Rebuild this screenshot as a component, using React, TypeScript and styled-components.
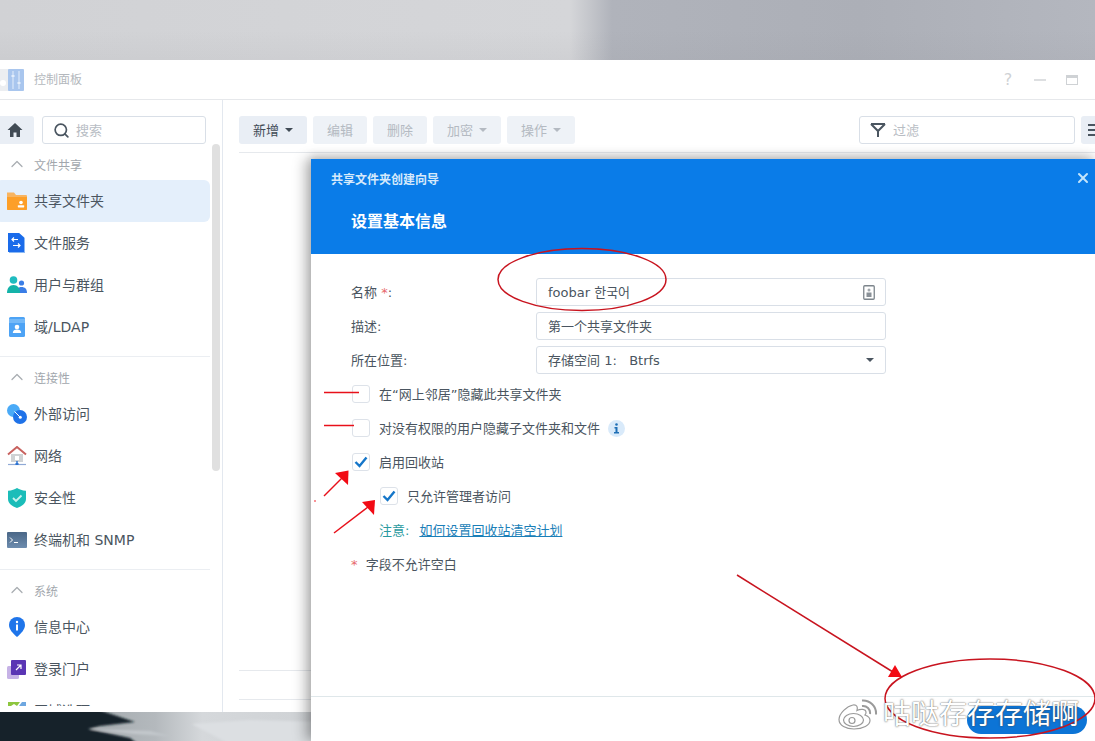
import React from 'react';
import styled, { createGlobalStyle } from 'styled-components';
import { ChevronUp, Search, X } from 'lucide-react';

const font = '"DejaVu Sans", "Noto Sans CJK SC", "Noto Sans CJK KR", sans-serif';

const GlobalStyle = createGlobalStyle`
  html, body {
    margin: 0;
    padding: 0;
    background: #fff;
  }
  * {
    box-sizing: border-box;
  }
`;

const Desktop = styled.div`
  position: relative;
  width: 1095px;
  height: 741px;
  overflow: hidden;
  font-family: ${font};
  background:
    linear-gradient(180deg, rgba(255, 255, 255, 0) 30px, rgba(120, 120, 125, 0.06) 60px),
    linear-gradient(90deg, #d1d2d5 0, #d5d6d9 570px, #c4c6cb 590px, #b0b3bb 612px, #acafb7 860px, #b4b7bf 1095px);
`;

const Wallpaper = styled.svg`
  position: absolute;
  left: 0;
  top: 712px;
  width: 311px;
  height: 29px;
`;

const Window = styled.div`
  position: absolute;
  left: -12px;
  top: 60px;
  width: 1107px;
  height: 652px;
  background: #fff;
  display: flex;
  flex-direction: column;
  overflow: hidden;
`;

const TitleBar = styled.div`
  height: 40px;
  flex-shrink: 0;
  display: flex;
  align-items: center;
  gap: 10px;
  padding: 0 15px 0 10px;
  border-bottom: 1px solid #e6e8eb;
`;

const WindowTitle = styled.div`
  flex: 1;
  font-size: 12px;
  color: #b4b8bd;
  padding-bottom: 2px;
`;

const TitleActions = styled.div`
  display: flex;
  gap: 16px;
  color: #cfd2d5;
`;

const TitleAction = styled.div`
  width: 16px;
  height: 16px;
  display: flex;
  align-items: center;
  justify-content: center;
  font-size: 16px;
`;

const WindowBody = styled.div`
  flex: 1;
  min-height: 0;
  display: flex;
`;

const Sidebar = styled.div`
  width: 235px;
  flex-shrink: 0;
  border-right: 1px solid #e3e8ef;
  padding: 16px 0 0 8px;
  display: flex;
  flex-direction: column;
  overflow: hidden;
`;

const SearchRow = styled.div`
  display: flex;
  gap: 8px;
  flex-shrink: 0;
`;

const HomeButton = styled.div`
  width: 38px;
  height: 28px;
  background: #e9eef5;
  border-radius: 3px;
  display: flex;
  align-items: center;
  justify-content: center;
  padding-right: 1px;
`;

const SearchBox = styled.div<{ $width: number; $gap: number }>`
  width: ${props => props.$width}px;
  height: 28px;
  flex-shrink: 0;
  border: 1px solid #d9dfe7;
  border-radius: 3px;
  background: #fff;
  display: flex;
  align-items: center;
  gap: ${props => props.$gap}px;
  padding-left: 10px;
  font-size: 13px;
  color: #b8bdc4;
`;

const NavArea = styled.div`
  height: 562px;
  overflow: hidden;
  display: flex;
  gap: 2px;
  align-items: flex-start;
`;

const Nav = styled.div`
  width: 214px;
`;

const ScrollThumb = styled.div`
  width: 8px;
  height: 327px;
  border-radius: 4px;
  background: #e0e0e0;
`;

const Group = styled.div<{ $first?: boolean }>`
  padding-top: 4px;
  margin-top: ${props => (props.$first ? '0' : '8px')};
  border-top: ${props => (props.$first ? 'none' : '1px solid #ebeef2')};
`;

const GroupTitle = styled.div`
  height: 32px;
  display: flex;
  align-items: center;
  gap: 7px;
  padding-left: 11px;
  font-size: 12px;
  color: #a2a7ad;
`;

const GroupChevron = styled.span`
  width: 20px;
  height: 20px;
  display: flex;
  align-items: center;
  justify-content: center;
  color: #a9adb2;
`;

const NavRow = styled.div<{ $active?: boolean }>`
  height: 42px;
  display: flex;
  align-items: center;
  gap: 7px;
  padding-left: 11px;
  border-radius: 6px;
  font-size: 14px;
  color: #4a5560;
  background: ${props => (props.$active ? '#e4effb' : 'transparent')};
`;

const NavLabel = styled.span`
  padding-bottom: 2px;
`;

const Main = styled.div`
  flex: 1;
  min-width: 0;
  padding: 16px 0 0 16px;
  display: flex;
  flex-direction: column;
`;

const Toolbar = styled.div`
  display: flex;
  gap: 6px;
  padding-bottom: 8px;
  border-bottom: 1px solid #e6e9ed;
`;

const ToolButton = styled.div<{ $disabled?: boolean; $caret?: boolean }>`
  width: ${props => (props.$caret ? '68px' : '54px')};
  height: 28px;
  padding-left: 14px;
  flex-shrink: 0;
  display: flex;
  align-items: center;
  gap: 5px;
  border-radius: 3px;
  font-size: 13px;
  background: ${props => (props.$disabled ? '#eef2f7' : '#e9eef5')};
  color: ${props => (props.$disabled ? '#b4bac2' : '#414b55')};
`;

const Caret = styled.span`
  width: 0;
  height: 0;
  margin: 0 1px;
  border-left: 4px solid transparent;
  border-right: 4px solid transparent;
  border-top: 4px solid currentColor;
`;

const FilterSlot = styled.div`
  margin-left: auto;
`;

const MenuButton = styled.div`
  width: 30px;
  height: 28px;
  flex-shrink: 0;
  margin-right: -16px;
  background: #e9eef5;
  border-radius: 3px;
  padding: 8px 0 0 7px;
  display: flex;
  flex-direction: column;
  gap: 3px;
`;

const MenuLine = styled.span`
  width: 10px;
  height: 2px;
  background: #4a5560;
`;

const ListArea = styled.div`
  flex: 1;
`;

const ListFooter = styled.div`
  height: 42px;
  flex-shrink: 0;
  border-top: 1px solid #e6e9ed;
`;

const ListFooterLine = styled.div`
  height: 29px;
  border-bottom: 1px solid #e6e9ed;
`;

const Dialog = styled.div`
  position: absolute;
  left: 311px;
  top: 159px;
  width: 784px;
  height: 582px;
  background: #fff;
  box-shadow: -6px 0 12px rgba(0, 0, 0, 0.28), 0 -4px 8px rgba(0, 0, 0, 0.12);
  display: flex;
  flex-direction: column;
`;

const DialogHeader = styled.div`
  height: 95px;
  flex-shrink: 0;
  background: #0a7ce8;
  color: #fff;
  padding: 10px 4px 0 20px;
`;

const DialogTopRow = styled.div`
  display: flex;
  justify-content: space-between;
  align-items: center;
  color: #d5e9fb;
  font-size: 12px;
  font-weight: 700;
  height: 18px;
`;

const CloseIcon = styled.span`
  display: flex;
  color: #c4e5fb;
`;

const DialogHeading = styled.div`
  margin: 23px 0 0 20px;
  font-size: 16px;
  font-weight: 700;
  line-height: 24px;
`;

const DialogBody = styled.div`
  flex: 1;
  padding: 24px 40px 0;
  display: flex;
  flex-direction: column;
  gap: 6px;
`;

const FormRow = styled.div<{ $indent?: number }>`
  height: 28px;
  display: flex;
  align-items: center;
  padding-left: ${props => props.$indent ?? 0}px;
  font-size: 13px;
  color: #4a5560;
`;

const FormText = styled.span`
  padding-bottom: 2px;
`;

const FieldLabel = styled.div`
  width: 185px;
  flex-shrink: 0;
  padding-bottom: 2px;
`;

const Required = styled.span`
  color: #e8696b;
`;

const Field = styled.div`
  width: 350px;
  height: 28px;
  border: 1px solid #d9dfe7;
  border-radius: 3px;
  padding: 0 10px 0 11px;
  display: flex;
  align-items: center;
  justify-content: space-between;
`;

const Box = styled.span`
  width: 18px;
  height: 18px;
  flex-shrink: 0;
  margin: 0 9px 0 1px;
  border: 1px solid #dde2e9;
  border-radius: 3px;
  background: #fff;
  display: flex;
  align-items: center;
  justify-content: center;
`;

const InfoBadge = styled.span`
  width: 17px;
  height: 17px;
  margin-left: 8px;
  border-radius: 50%;
  background: #d9eafa;
  display: flex;
  align-items: center;
  justify-content: center;
`;

const NoteLabel = styled.span`
  color: #2a9a9f;
  margin-right: 10px;
  padding-bottom: 2px;
`;

const NoteLink = styled.a`
  color: #1b7fb8;
  text-decoration: underline;
  padding-bottom: 2px;
`;

const DialogFooter = styled.div`
  height: 45px;
  flex-shrink: 0;
  border-top: 1px solid #dfe7ea;
  padding: 9px 8px 0 0;
  display: flex;
  justify-content: flex-end;
`;

const PrimaryButton = styled.div`
  width: 120px;
  height: 28px;
  border-radius: 14px;
  background: #0c74d6;
`;

const Annotations = styled.svg`
  position: absolute;
  left: 0;
  top: 0;
  width: 1095px;
  height: 741px;
  pointer-events: none;
`;

const Watermark = styled.div`
  position: absolute;
  left: 838px;
  top: 697px;
  display: flex;
  align-items: center;
  gap: 5px;
  font-size: 28px;
  line-height: 36px;
  color: #fff;
  white-space: nowrap;
  text-shadow: 0 0 2px rgba(70, 70, 70, 0.75), 0 0 1px rgba(70, 70, 70, 0.6);
`;

const Folder = () => (
  <svg width="20" height="20" viewBox="0 0 20 20">
    <path d="M0 1.500h7l2 2.500h10a1 1 0 0 1 1 1v13a1 1 0 0 1-1 1H1a1 1 0 0 1-1-1z" fill="#f8b460" />
    <path d="M0 6h20v12a1 1 0 0 1-1 1H1a1 1 0 0 1-1-1z" fill="#fd9f28" />
    <circle cx="14" cy="11.500" r="1.800" fill="#fff" />
    <rect x="10.800" y="14.200" width="6.400" height="2.200" rx="0.600" fill="#fff" />
  </svg>
);

const FileServices = () => (
  <svg width="20" height="20" viewBox="0 0 20 20">
    <path d="M2 0h10l6 5v15H2z" fill="#8cb9f3" />
    <path d="M1 0h11l5 4.500V19H1z" fill="#1a6bea" />
    <path d="M11 6.500H5M7 4.500 5 6.500l2 2M6 12.500h7M11 10.500l2 2-2 2" fill="none" stroke="#fff" strokeWidth="1.200" />
  </svg>
);

const Users = () => (
  <svg width="20" height="20" viewBox="0 0 20 20">
    <circle cx="14.500" cy="8" r="2.600" fill="#3a7de6" />
    <path d="M9 18c0-4 2-6 5.500-6s5.500 2 5.500 6z" fill="#3a7de6" />
    <circle cx="6.500" cy="5" r="3.800" fill="#20bcc0" />
    <path d="M0 18c0-5 2.500-8 6.500-8s6.500 3 6.500 8z" fill="#14b3a9" />
  </svg>
);

const Domain = () => (
  <svg width="20" height="20" viewBox="0 0 20 20">
    <rect x="2" y="0" width="16" height="20" rx="1.500" fill="#4da3f5" />
    <path d="M2 2h16v4H2z" fill="#74b9f8" />
    <circle cx="10" cy="10" r="2.300" fill="#fff" />
    <path d="M5.800 16c0-2.500 1.700-3.500 4.200-3.500s4.200 1 4.200 3.500z" fill="#fff" />
  </svg>
);

const External = () => (
  <svg width="20" height="20" viewBox="0 0 20 20">
    <circle cx="6.500" cy="6.500" r="6.500" fill="#4aaaf7" />
    <circle cx="13" cy="13" r="7" fill="#1f72e8" />
    <path d="M7.500 7.500 13 13" stroke="#fff" strokeWidth="1" />
    <circle cx="13.300" cy="13.300" r="1.500" fill="#fff" />
  </svg>
);

const Network = () => (
  <svg width="20" height="20" viewBox="0 0 20 20">
    <path d="M4 8h12v8H4z" fill="#cfd2d4" />
    <rect x="8" y="10" width="4" height="4" fill="#fff" />
    <path d="M1 8.500 10 1l9 7.500" fill="none" stroke="#c8625f" strokeWidth="2" />
    <path d="M10 15v3" stroke="#2c73d2" strokeWidth="1.500" />
    <path d="M1 18.500h18" stroke="#8fa9d6" strokeWidth="1.200" />
    <rect x="8.500" y="17" width="3" height="2" fill="#2c73d2" />
  </svg>
);

const Security = () => (
  <svg width="20" height="20" viewBox="0 0 20 20">
    <path d="M10 0c2.500 1.500 5 2.500 9 2.800V11c0 4-4 7.500-9 9-5-1.500-9-5-9-9V2.800C5 2.500 7.500 1.500 10 0z" fill="#1bbdb9" />
    <path d="M6 10l3 3 5.500-5.500" fill="none" stroke="#c9f3ee" strokeWidth="1.800" />
  </svg>
);

const Terminal = () => (
  <svg width="20" height="20" viewBox="0 0 20 20">
    <defs>
      <linearGradient id="term" x1="0" y1="0" x2="0" y2="1">
        <stop offset="0" stopColor="#4a6787" />
        <stop offset="1" stopColor="#6d8cae" />
      </linearGradient>
    </defs>
    <rect y="2" width="20" height="16" rx="1" fill="url(#term)" />
    <path d="M3 7.500l2.500 2.500L3 12.500M7 12.500h4" fill="none" stroke="#fff" strokeWidth="1" />
  </svg>
);

const InfoPin = () => (
  <svg width="20" height="20" viewBox="0 0 20 20">
    <path d="M10 0a8 8 0 0 1 8 8c0 4.500-4 8.500-8 12C6 16.500 2 12.500 2 8a8 8 0 0 1 8-8z" fill="#1f75ea" />
    <circle cx="10" cy="5" r="1.200" fill="#fff" />
    <rect x="9" y="7.500" width="2" height="6" fill="#fff" />
  </svg>
);

const LoginPortal = () => (
  <svg width="20" height="20" viewBox="0 0 20 20">
    <rect x="0" y="7" width="12" height="13" rx="1.500" fill="#c6b2e6" />
    <rect x="4" y="1" width="15" height="15" rx="1" fill="#5a35b4" />
    <path d="M9 11l5-5M10 6h4v4" fill="none" stroke="#fff" strokeWidth="1.200" />
  </svg>
);

const Region = () => (
  <svg width="20" height="20" viewBox="0 0 20 20">
    <path d="M1 1h12l-3 4-3-2-3 2H1z" fill="#8dc63f" />
    <path d="M12 5l3-4h4v4z" fill="#6ea7e0" />
  </svg>
);

const CheckMark = () => (
  <svg width="14" height="14" viewBox="0 0 14 14">
    <path d="M1.500 7 5.500 11 12.500 2.500" fill="none" stroke="#1576c9" strokeWidth="2.400" />
  </svg>
);

const navGroups = [
  {
    title: '文件共享',
    items: [
      { label: '共享文件夹', icon: <Folder />, active: true },
      { label: '文件服务', icon: <FileServices /> },
      { label: '用户与群组', icon: <Users /> },
      { label: '域/LDAP', icon: <Domain /> }
    ]
  },
  {
    title: '连接性',
    items: [
      { label: '外部访问', icon: <External /> },
      { label: '网络', icon: <Network /> },
      { label: '安全性', icon: <Security /> },
      { label: '终端机和 SNMP', icon: <Terminal /> }
    ]
  },
  {
    title: '系统',
    items: [
      { label: '信息中心', icon: <InfoPin /> },
      { label: '登录门户', icon: <LoginPortal /> },
      { label: '区域选项', icon: <Region /> }
    ]
  }
];

const toolButtons = [
  { label: '新增', caret: true },
  { label: '编辑', disabled: true },
  { label: '删除', disabled: true },
  { label: '加密', caret: true, disabled: true },
  { label: '操作', caret: true, disabled: true }
];

export default function App() {
  return (
    <Desktop>
      <GlobalStyle />
      <Wallpaper viewBox="0 0 311 29" preserveAspectRatio="none">
        <defs>
          <linearGradient id="sand" x1="0" y1="0" x2="1" y2="0">
            <stop offset="0" stopColor="#8d9499" />
            <stop offset="0.5" stopColor="#b4b9bd" />
            <stop offset="0.65" stopColor="#d5d8db" />
            <stop offset="1" stopColor="#cfd2d5" />
          </linearGradient>
          <filter id="soft">
            <feGaussianBlur stdDeviation="1" />
          </filter>
        </defs>
        <rect width="311" height="29" fill="url(#sand)" />
        <g filter="url(#soft)">
          <path d="M192 12 250 8 320 10V35H235Z" fill="#dcdfe2" />
          <path d="M-5 -5H90L135 10 100 14 88 17 130 26 142 35H-5Z" fill="#14232c" />
          <path d="M88 17 150 19 170 24 135 22Z" fill="#c3c8cc" />
        </g>
      </Wallpaper>

      <Window>
        <TitleBar>
          <svg width="26" height="22" viewBox="0 0 26 22">
            <rect x="0" y="0" width="26" height="22" rx="2" fill="#eceef1" />
            <rect x="10" y="0" width="16" height="22" rx="1" fill="#a9c6ee" />
            <path d="M15 2v18M21 2v18" stroke="#e4eefb" strokeWidth="1" />
            <rect x="13.500" y="6" width="3" height="2" fill="#e4eefb" />
            <rect x="19.500" y="13" width="3" height="2" fill="#e4eefb" />
            <circle cx="5" cy="14" r="3" fill="#fff" />
          </svg>
          <WindowTitle>控制面板</WindowTitle>
          <TitleActions>
            <TitleAction>?</TitleAction>
            <TitleAction>
              <svg width="14" height="14" viewBox="0 0 14 14">
                <path d="M1 7h12" stroke="currentColor" strokeWidth="1.400" />
              </svg>
            </TitleAction>
            <TitleAction>
              <svg width="14" height="14" viewBox="0 0 14 14">
                <rect x="1.500" y="2.500" width="11" height="9" fill="none" stroke="currentColor" />
                <rect x="1.500" y="2.500" width="11" height="2.500" fill="currentColor" />
              </svg>
            </TitleAction>
          </TitleActions>
        </TitleBar>

        <WindowBody>
          <Sidebar>
            <SearchRow>
              <HomeButton>
                <svg width="16" height="16" viewBox="0 0 16 16">
                  <path d="M8 1 0.500 8H3v7h3.500v-4.500h3V15H13V8h2.500z" fill="#414b55" />
                </svg>
              </HomeButton>
              <SearchBox $width={164} $gap={6}>
                <Search size={17} color="#4a5560" strokeWidth={2.4} />
                <FormText>搜索</FormText>
              </SearchBox>
            </SearchRow>
            <NavArea>
              <Nav>
                {navGroups.map((group, index) => (
                  <Group key={group.title} $first={index === 0}>
                    <GroupTitle>
                      <GroupChevron>
                        <ChevronUp size={20} strokeWidth={1.5} />
                      </GroupChevron>
                      {group.title}
                    </GroupTitle>
                    {group.items.map(item => (
                      <NavRow key={item.label} $active={item.active}>
                        {item.icon}
                        <NavLabel>{item.label}</NavLabel>
                      </NavRow>
                    ))}
                  </Group>
                ))}
              </Nav>
              <ScrollThumb />
            </NavArea>
          </Sidebar>

          <Main>
            <Toolbar>
              {toolButtons.map(button => (
                <ToolButton key={button.label} $disabled={button.disabled} $caret={button.caret}>
                  <FormText>{button.label}</FormText>
                  {button.caret && <Caret />}
                </ToolButton>
              ))}
              <FilterSlot>
                <SearchBox $width={216} $gap={7}>
                  <svg width="16" height="16" viewBox="0 0 16 16">
                    <path d="M1 2h14M1 2l7 7 7-7M8 9v6" fill="none" stroke="#4a5560" strokeWidth="2" />
                  </svg>
                  <FormText>过滤</FormText>
                </SearchBox>
              </FilterSlot>
              <MenuButton>
                <MenuLine />
                <MenuLine />
                <MenuLine />
              </MenuButton>
            </Toolbar>
            <ListArea />
            <ListFooter>
              <ListFooterLine />
            </ListFooter>
          </Main>
        </WindowBody>
      </Window>

      <Dialog>
        <DialogHeader>
          <DialogTopRow>
            共享文件夹创建向导
            <CloseIcon>
              <X size={16} strokeWidth={3} />
            </CloseIcon>
          </DialogTopRow>
          <DialogHeading>设置基本信息</DialogHeading>
        </DialogHeader>

        <DialogBody>
          <FormRow>
            <FieldLabel>
              名称 <Required>*</Required>:
            </FieldLabel>
            <Field>
              <FormText>foobar 한국어</FormText>
              <svg width="12" height="15" viewBox="0 0 12 15">
                <rect x="0.750" y="0.750" width="10.500" height="13.500" rx="1" fill="#fff" stroke="#7d858c" strokeWidth="1.300" />
                <rect x="3.500" y="7.500" width="5" height="4.500" fill="#8a9198" />
                <circle cx="6" cy="5" r="1.500" fill="#a2a8ad" />
              </svg>
            </Field>
          </FormRow>
          <FormRow>
            <FieldLabel>描述:</FieldLabel>
            <Field>
              <FormText>第一个共享文件夹</FormText>
            </Field>
          </FormRow>
          <FormRow>
            <FieldLabel>所在位置:</FieldLabel>
            <Field>
              <FormText>存储空间 1:&nbsp;&nbsp;&nbsp;Btrfs</FormText>
              <Caret />
            </Field>
          </FormRow>
          <FormRow>
            <Box />
            <FormText>在“网上邻居”隐藏此共享文件夹</FormText>
          </FormRow>
          <FormRow>
            <Box />
            <FormText>对没有权限的用户隐藏子文件夹和文件</FormText>
            <InfoBadge>
              <svg width="9" height="11" viewBox="0 0 9 11">
                <circle cx="4.500" cy="1.500" r="1.300" fill="#1f6fb5" />
                <path d="M2.500 4h3v5h1.500v1.500H2V9h1.500V5.500h-1z" fill="#1f6fb5" />
              </svg>
            </InfoBadge>
          </FormRow>
          <FormRow>
            <Box>
              <CheckMark />
            </Box>
            <FormText>启用回收站</FormText>
          </FormRow>
          <FormRow $indent={28}>
            <Box>
              <CheckMark />
            </Box>
            <FormText>只允许管理者访问</FormText>
          </FormRow>
          <FormRow $indent={28}>
            <NoteLabel>注意:</NoteLabel>
            <NoteLink>如何设置回收站清空计划</NoteLink>
          </FormRow>
          <FormRow>
            <FormText>
              <Required>*</Required>&nbsp;&nbsp;字段不允许空白
            </FormText>
          </FormRow>
        </DialogBody>

        <DialogFooter>
          <PrimaryButton />
        </DialogFooter>
      </Dialog>

      <Annotations viewBox="0 0 1095 741">
        <g fill="none" stroke="#c8141f" strokeWidth="1.500">
          <ellipse cx="582" cy="279.500" rx="84" ry="31" />
          <ellipse cx="990" cy="698.500" rx="105" ry="39.500" />
          <path d="M737 575 893 672" />
        </g>
        <g fill="none" stroke="#e8101a" strokeWidth="1.500">
          <path d="M324 392.500H359" />
          <path d="M324 425.500H354" />
          <path d="M324 496 342 478" />
          <path d="M334 533 368 507" />
        </g>
        <g fill="#f20a14">
          <path d="M348.500 470.500 335 473 348 485Z" />
          <path d="M375 500 362 502 374 515Z" />
          <path d="M895 665 888 677H902Z" />
          <circle cx="315" cy="501" r="0.800" />
        </g>
      </Annotations>

      <Watermark>
        <svg width="40" height="32" viewBox="0 0 40 32">
          <g fill="none" stroke="#9a9a9a" strokeWidth="1.200">
            <path d="M16 30C8 30 1 26.500 1 20.500 1 14.500 9 7 15 6c4-.500 5 2 4 5.500 3-1.500 9-2 9 2 0 1-.500 2-1 2.500 3 1 5 3 5 5.500C32 26 25 30 16 30z" />
            <ellipse cx="15.500" cy="21" rx="10" ry="6.500" />
            <circle cx="14" cy="21.500" r="3" />
            <path d="M24 7a7 7 0 0 1 8 8M24 1.500a13 13 0 0 1 14 14" strokeWidth="2" />
          </g>
        </svg>
        咕哒存存存储啊
      </Watermark>
    </Desktop>
  );
}
